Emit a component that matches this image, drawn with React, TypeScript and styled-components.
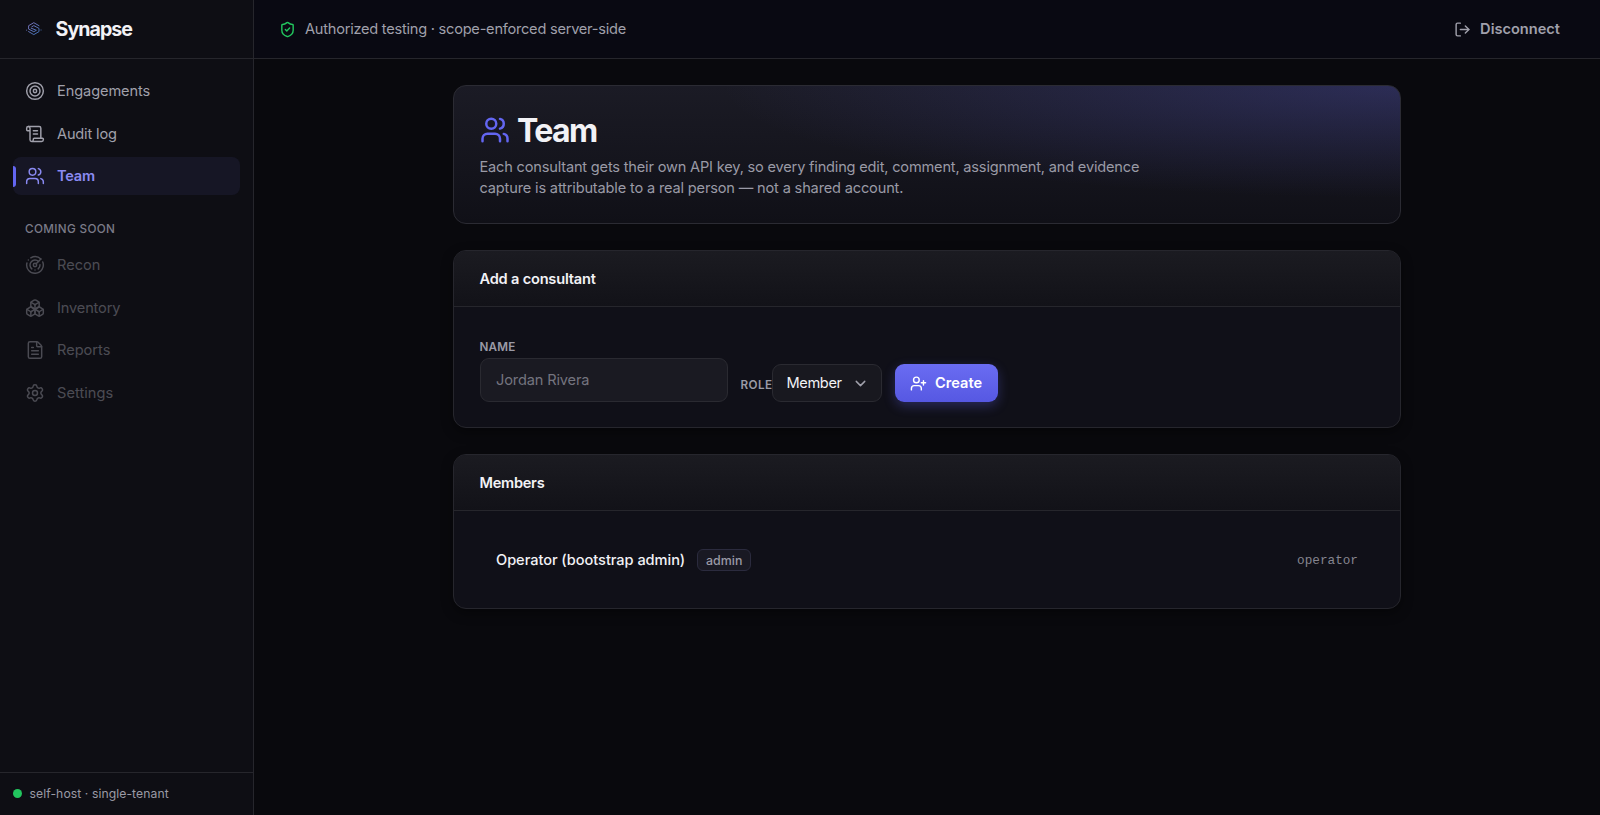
import React from "react";
import styled, { createGlobalStyle, css } from "styled-components";
import {
  Target, ScrollText, Users, Radar, Boxes, FileText, Settings,
  ShieldCheck, LogOut, UserPlus, ChevronDown,
} from "lucide-react";

const GlobalStyle = createGlobalStyle`
  *, *::before, *::after { box-sizing: border-box; }
  body {
    margin: 0;
    background: #09090d;
    color: #f2f2f6;
    font-family: Inter, "Liberation Sans", sans-serif;
    font-size: 14.6px;
    -webkit-font-smoothing: antialiased;
  }
  h1, h2, p { margin: 0; }
`;

const line = "#26262c";

const Shell = styled.div`
  display: grid;
  grid-template-columns: 254px 1fr;
  height: 815px;
  overflow: hidden;
`;

const Sidebar = styled.aside`
  display: flex;
  flex-direction: column;
  background: #0e0e14;
  border-right: 1px solid ${line};
`;

const Brand = styled.div`
  display: flex;
  align-items: center;
  gap: 11.5px;
  height: 59px;
  padding-left: 24px;
  border-bottom: 1px solid ${line};
  svg { flex: none; }
`;

const Label = styled.span<{ $track?: number }>`
  letter-spacing: ${(p) => p.$track ?? 0}px;
  white-space: nowrap;
`;

const BrandName = styled.span`
  font-size: 19.6px;
  font-weight: 700;
  letter-spacing: -0.95px;
`;

const Nav = styled.nav`
  display: flex;
  flex-direction: column;
  gap: 4px;
  flex: 1;
  padding: 13px 13px 0;
`;

const NavItem = styled.a<{ $active?: boolean; $disabled?: boolean }>`
  position: relative;
  display: flex;
  align-items: center;
  gap: 12px;
  height: 38.4px;
  padding-left: 12px;
  border-radius: 8px;
  color: #a0a0ab;
  ${(p) => p.$disabled && css`opacity: 0.42;`}
  ${(p) => p.$active && css`
    color: #8a8af2;
    font-weight: 600;
    background: #161625;
    &::before {
      content: "";
      position: absolute;
      left: 0;
      top: 9px;
      width: 3px;
      height: 21px;
      border-radius: 0 3px 3px 0;
      background: #6366f1;
    }
  `}
`;

const NavHeading = styled.div`
  height: 27px;
  margin-top: 16px;
  padding: 5px 0 0 12px;
  font-size: 11.7px;
  line-height: 18px;
  font-weight: 500;
  color: #7b7b88;
`;

const SideFooter = styled.div`
  display: flex;
  align-items: center;
  gap: 8px;
  height: 43px;
  padding: 0 0 1px 12.5px;
  border-top: 1px solid ${line};
  font-size: 12.2px;
  color: #9a9aa5;
`;

const Dot = styled.i`
  width: 9px;
  height: 9px;
  border-radius: 50%;
  background: #22c55e;
`;

const Main = styled.div`
  display: flex;
  flex-direction: column;
  min-width: 0;
`;

const Topbar = styled.header`
  display: flex;
  align-items: center;
  justify-content: space-between;
  height: 59px;
  padding: 0 40px 0 25px;
  border-bottom: 1px solid ${line};
  background: #090912;
  color: #a0a0ab;
`;

const Cluster = styled.div<{ $gap: number }>`
  display: flex;
  align-items: center;
  gap: ${(p) => p.$gap}px;
`;

const Disconnect = styled(Cluster)`
  font-weight: 600;
`;

const Content = styled.main`
  display: flex;
  flex-direction: column;
  gap: 26px;
  width: 948px;
  margin: 26px auto 0;
`;

const Hero = styled.section`
  height: 139px;
  padding: 24px 25.5px;
  border: 1px solid #2b2b33;
  border-radius: 13px;
  background:
    radial-gradient(ellipse 680px 112px at 100% 0%, rgba(99, 102, 241, 0.24), rgba(99, 102, 241, 0) 100%),
    linear-gradient(180deg, #1b1b25, #101017);
`;

const HeroTitle = styled.h1`
  display: flex;
  align-items: center;
  gap: 7.5px;
  height: 40px;
  font-size: 32px;
  font-weight: 700;
`;

const HeroText = styled.p`
  margin-top: 7px;
  line-height: 21.4px;
  color: #9a9aa6;
`;

const Card = styled.section<{ $height: number }>`
  height: ${(p) => p.$height}px;
  border: 1px solid #26262d;
  border-radius: 13px;
  overflow: hidden;
  background: #101018;
  box-shadow: 0 4px 12px rgba(0, 0, 0, 0.4);
`;

const CardHeader = styled.h2`
  display: flex;
  align-items: center;
  height: 56px;
  padding-left: 25.5px;
  border-bottom: 1px solid ${line};
  background: linear-gradient(180deg, #1b1b21, #121218);
  font-size: 14.6px;
  font-weight: 600;
`;

const Form = styled.div`
  display: flex;
  align-items: flex-end;
  gap: 13px;
  padding: 32px 25.5px 0;
`;

const Field = styled.label`
  display: flex;
  flex-direction: column;
  gap: 3px;
`;

const InlineField = styled.label`
  display: flex;
  align-items: center;
`;

const FieldLabel = styled.span<{ $drop?: number }>`
  padding-top: ${(p) => p.$drop ?? 0}px;
  font-size: 11.7px;
  line-height: 16px;
  font-weight: 600;
  color: #9a9aa6;
`;

const NameInput = styled.div`
  display: flex;
  align-items: center;
  width: 248px;
  height: 44px;
  padding-left: 15.5px;
  border: 1px solid #2a2a31;
  border-radius: 9px;
  background: #1a1a22;
  color: #74747f;
`;

const RoleSelect = styled.div`
  display: flex;
  align-items: center;
  justify-content: space-between;
  width: 109.5px;
  height: 38px;
  padding: 0 12px 0 13px;
  border: 1px solid #2a2a31;
  border-radius: 9px;
  background: #18181f;
  svg { color: #a0a0ab; }
`;

const CreateButton = styled.button`
  display: flex;
  align-items: center;
  gap: 8px;
  width: 103px;
  height: 38px;
  padding: 0 0 0 15px;
  border: 0;
  border-radius: 9px;
  background: linear-gradient(180deg, #6a6cf2, #5658e2);
  box-shadow: 0 4px 12px rgba(99, 102, 241, 0.3);
  color: #fff;
  font: inherit;
  font-weight: 600;
`;

const MemberRow = styled.div`
  display: flex;
  align-items: center;
  height: 98px;
  padding: 0 42px;
  font-weight: 500;
`;

const RoleBadge = styled.span`
  display: flex;
  align-items: center;
  justify-content: center;
  width: 54px;
  height: 22px;
  margin-left: 12px;
  border: 1px solid #2b2b3e;
  border-radius: 6px;
  background: #191923;
  color: #9a9aa6;
  font-size: 12.4px;
`;

const Handle = styled.code`
  margin-left: auto;
  color: #85858f;
  font-family: "Liberation Mono", monospace;
  font-size: 12.7px;
  font-weight: 400;
`;

const Logo = () => (
  <svg width="20" height="20" viewBox="0 0 20 20" fill="none" strokeWidth="1" strokeLinecap="round" strokeLinejoin="round">
    <defs>
      <linearGradient id="mark" x1="4" y1="3" x2="15" y2="16" gradientUnits="userSpaceOnUse">
        <stop stopColor="#7d72b8" />
        <stop offset="1" stopColor="#3d70b4" />
      </linearGradient>
    </defs>
    <g stroke="url(#mark)">
      <path d="M15 6.7 9.8 3.7 4.6 6.7v3.4l5.2 2.6 2-1.1" />
      <path d="M4.6 12.6l5.2 3 5.2-3V9.4L9.8 6.6l-2 1.2" />
      <path d="M7.2 9.2l5 2M2.6 11.2h.1M17 11h.1" />
    </g>
  </svg>
);

const primary = [
  { icon: Target, text: "Engagements", track: -0.1 },
  { icon: ScrollText, text: "Audit log", track: -0.17 },
  { icon: Users, text: "Team", track: -0.2, active: true },
];

const upcoming = [
  { icon: Radar, text: "Recon", track: 0 },
  { icon: Boxes, text: "Inventory", track: -0.15 },
  { icon: FileText, text: "Reports", track: 0 },
  { icon: Settings, text: "Settings", track: 0.05 },
];

export default function App() {
  return (
    <>
      <GlobalStyle />
      <Shell>
        <Sidebar>
          <Brand><Logo /><BrandName>Synapse</BrandName></Brand>
          <Nav>
            {primary.map(({ icon: Icon, text, track, active }) => (
              <NavItem key={text} $active={active}>
                <Icon size={20} strokeWidth={1.75} />
                <Label $track={track}>{text}</Label>
              </NavItem>
            ))}
            <NavHeading><Label $track={0.35}>COMING SOON</Label></NavHeading>
            {upcoming.map(({ icon: Icon, text, track }) => (
              <NavItem key={text} $disabled>
                <Icon size={20} strokeWidth={1.75} />
                <Label $track={track}>{text}</Label>
              </NavItem>
            ))}
          </Nav>
          <SideFooter><Dot /><Label $track={0.07}>self-host · single-tenant</Label></SideFooter>
        </Sidebar>
        <Main>
          <Topbar>
            <Cluster $gap={9}>
              <ShieldCheck size={17} color="#22c55e" />
              <Label $track={-0.24}>Authorized testing · scope-enforced server-side</Label>
            </Cluster>
            <Disconnect $gap={9}>
              <LogOut size={17} />
              <Label>Disconnect</Label>
            </Disconnect>
          </Topbar>
          <Content>
            <Hero>
              <HeroTitle><Users size={30} color="#6366f1" /><Label $track={-1.6}>Team</Label></HeroTitle>
              <HeroText>
                <Label $track={-0.19}>Each consultant gets their own API key, so every finding edit, comment, assignment, and evidence</Label>
                <br />
                <Label $track={-0.17}>capture is attributable to a real person — not a shared account.</Label>
              </HeroText>
            </Hero>
            <Card $height={178}>
              <CardHeader><Label $track={-0.2}>Add a consultant</Label></CardHeader>
              <Form>
                <Field>
                  <FieldLabel><Label $track={0.2}>NAME</Label></FieldLabel>
                  <NameInput><Label $track={-0.15}>Jordan Rivera</Label></NameInput>
                </Field>
                <InlineField>
                  <FieldLabel $drop={3}><Label $track={0.4}>ROLE</Label></FieldLabel>
                  <RoleSelect><Label $track={-0.35}>Member</Label><ChevronDown size={17} /></RoleSelect>
                </InlineField>
                <CreateButton><UserPlus size={17} /><Label $track={0.05}>Create</Label></CreateButton>
              </Form>
            </Card>
            <Card $height={155}>
              <CardHeader><Label $track={-0.27}>Members</Label></CardHeader>
              <MemberRow>
                <Label $track={-0.05}>Operator (bootstrap admin)</Label>
                <RoleBadge><Label>admin</Label></RoleBadge>
                <Handle>operator</Handle>
              </MemberRow>
            </Card>
          </Content>
        </Main>
      </Shell>
    </>
  );
}
